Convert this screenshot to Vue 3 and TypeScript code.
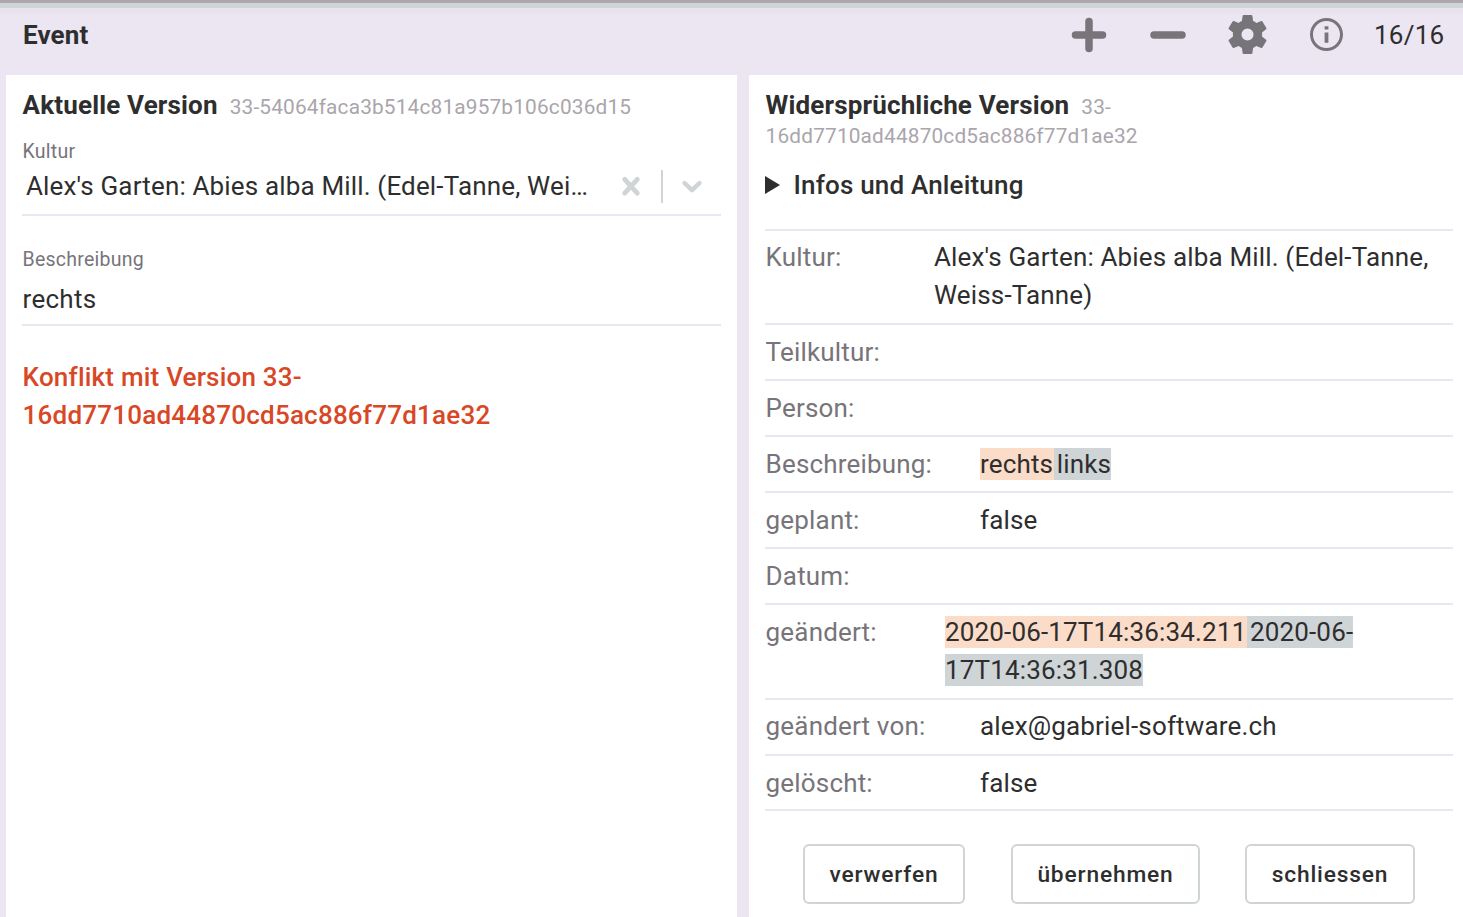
<script setup lang="ts">
interface Row { label: string; value?: string; old?: string; next?: string; height: number; indent: number; top: number }
const rows: Row[] = [
  { label: 'Kultur:', value: "Alex's Garten: Abies alba Mill. (Edel-Tanne, Weiss-Tanne)", height: 94, indent: 169, top: 7 },
  { label: 'Teilkultur:', height: 56, indent: 215, top: 8 },
  { label: 'Person:', height: 56, indent: 215, top: 8 },
  { label: 'Beschreibung:', old: 'rechts', next: 'links', height: 56, indent: 215, top: 8 },
  { label: 'geplant:', value: 'false', height: 56, indent: 215, top: 8 },
  { label: 'Datum:', height: 56, indent: 215, top: 8 },
  { label: 'geändert:', old: '2020-06-17T14:36:34.211', next: '2020-06-17T14:36:31.308', height: 95, indent: 180, top: 8 },
  { label: 'geändert von:', value: 'alex@gabriel-software.ch', height: 56, indent: 215, top: 7 },
  { label: 'gelöscht:', value: 'false', height: 55, indent: 215, top: 8 },
]
</script>

<template>
  <div class="page">
    <header class="bar">
      <h1>Event</h1>
      <div class="tools">
        <svg class="plus" viewBox="0 0 36 36"><path d="M18 4.500v27M4.500 18h27" /></svg>
        <svg class="minus" viewBox="0 0 36 36"><path d="M4 18h28" /></svg>
        <svg class="gear" viewBox="2 2 20 20"><path d="M19.43 12.98c.04-.32.07-.64.07-.98s-.03-.66-.07-.98l2.11-1.65c.19-.15.24-.42.12-.64l-2-3.46c-.12-.22-.39-.3-.61-.22l-2.49 1c-.52-.4-1.08-.73-1.69-.98l-.38-2.65C14.46 2.18 14.25 2 14 2h-4c-.25 0-.46.18-.49.42l-.38 2.65c-.61.25-1.17.59-1.69.98l-2.49-1c-.23-.09-.49 0-.61.22l-2 3.46c-.13.22-.07.49.12.64l2.11 1.65c-.04.32-.07.65-.07.98s.03.66.07.98l-2.11 1.65c-.19.15-.24.42-.12.64l2 3.46c.12.22.39.3.61.22l2.49-1c.52.4 1.08.73 1.69.98l.38 2.65c.03.24.24.42.49.42h4c.25 0 .46-.18.49-.42l.38-2.65c.61-.25 1.17-.59 1.69-.98l2.49 1c.23.09.49 0 .61-.22l2-3.46c.12-.22.07-.49-.12-.64l-2.11-1.65zM12 15.1a3.100 3.100 0 1 1 0-6.200 3.100 3.100 0 0 1 0 6.200z" /></svg>
        <svg class="info" viewBox="2 2 20 20"><path d="M10.850 7h2.300v2h-2.300zm0 3.800h2.300v6.200h-2.300zM12 2C6.480 2 2 6.480 2 12s4.480 10 10 10 10-4.480 10-10S17.520 2 12 2zm0 18.200c-4.520 0-8.200-3.680-8.200-8.200s3.680-8.200 8.200-8.200 8.200 3.680 8.200 8.200-3.680 8.200-8.200 8.200z" /></svg>
        <span class="count">16/16</span>
      </div>
    </header>
    <main>
      <section class="left">
        <h2 class="first">Aktuelle Version <small>33-54064faca3b514c81a957b106c036d15</small></h2>
        <label class="kultur">Kultur</label>
        <div class="select">
          <span class="chosen">Alex's Garten: Abies alba Mill. (Edel-Tanne, Weiss-Tanne)</span>
          <svg class="clear" viewBox="0 0 20 20"><path d="m4.300 4 11.400 12.500M15.700 4 4.300 16.500" /></svg>
          <i></i>
          <svg class="chevron" viewBox="0 0 24 24"><path d="m4.500 9 7.500 7.200L19.500 9" /></svg>
        </div>
        <label class="beschreibung">Beschreibung</label>
        <div class="input">rechts</div>
        <p class="conflict">Konflikt mit Version 33-<br />16dd7710ad44870cd5ac886f77d1ae32</p>
      </section>
      <section class="right">
        <h2>Widersprüchliche Version <small>33-<br />16dd7710ad44870cd5ac886f77d1ae32</small></h2>
        <div class="summary"><svg viewBox="0 0 15 18"><path d="M0 0 15 9 0 18Z" /></svg>Infos und Anleitung</div>
        <div class="rows">
          <div v-for="row in rows" :key="row.label" class="row" :style="{ height: row.height + 'px', paddingTop: row.top + 'px', gridTemplateColumns: row.indent + 'px 1fr' }">
            <span class="name">{{ row.label }}</span>
            <span v-if="row.old" class="value"><span class="old">{{ row.old }}</span><span class="new">{{ row.next }}</span></span>
            <span v-else class="value">{{ row.value }}</span>
          </div>
        </div>
        <div class="actions"><button class="a">verwerfen</button><button class="b">übernehmen</button><button class="c">schliessen</button></div>
      </section>
    </main>
  </div>
</template>

<style>
body { margin: 0; overflow: hidden; }
</style>
<style scoped>
* { box-sizing: border-box; }
.page { width: 1463px; height: 917px; background: #ebe6f2; font-family: Roboto, sans-serif; font-size: 26px; line-height: 38px; letter-spacing: .16px; color: #2e2e2e; overflow: hidden; }
.bar { height: 75px; border-top: 3px solid #aea5ad; box-shadow: inset 0 5px #cfd4d7, inset 0 11px #e9e3ef; display: flex; justify-content: space-between; padding: 13px 19px 0 23px; }
h1, h2 { margin: 0; font-size: 26px; font-weight: 700; }
.tools { display: flex; align-items: center; height: 38px; color: #77747a; }
svg { flex: none; fill: currentColor; }
.plus, .minus { width: 36px; height: 36px; fill: none; stroke: currentColor; stroke-width: 7.5; stroke-linecap: round; }
.minus { margin-left: 43px; }
.gear { width: 39px; height: 39px; margin: 0 0 1px 41.5px; }
.info { width: 33px; height: 33px; margin: 0 0 1px 43px; }
.count { margin-left: 31.5px; color: #2e2e2e; width: 70px; white-space: nowrap; letter-spacing: .26px; }
main { display: flex; gap: 12px; padding-left: 6px; height: 842px; }
section { background: #fff; }
.left { width: 731px; padding: 11px 16px 0 16px; }
.right { width: 714px; padding: 11px 10px 0 16px; }
small { font-size: 20.8px; line-height: 1; font-weight: 400; color: #aaa5ac; letter-spacing: .18px; margin-left: 5.4px; }
h2, label, .input, .conflict, .name { padding-left: .6px; }
.right h2 { line-height: 29px; padding-top: 5px; height: 80px; }
label { display: block; font-size: 19.5px; color: #77747a; line-height: 26px; letter-spacing: .24px; }
.kultur { margin-top: 15px; }
.select { height: 51px; border-bottom: 2px solid #ebe6f2; display: flex; align-items: center; padding: 0 17px 7px 4px; color: #cfd4d7; }
.chosen { width: 563px; overflow: hidden; white-space: nowrap; text-overflow: ellipsis; color: #2e2e2e; }
.clear { width: 22px; height: 22px; margin-left: 31px; }
.clear, .chevron { fill: none; stroke: currentColor; stroke-width: 4.4; stroke-linecap: round; stroke-linejoin: round; }
.clear { margin-left: 31.5px; margin-right: -.5px; }
.select i { width: 2px; height: 33px; background: #cfd4d7; margin-left: 19px; }
.chevron { width: 24px; height: 24px; margin-left: 17.5px; }
.beschreibung { margin-top: 31px; }
.input { border-bottom: 2px solid #ebe6f2; padding-top: 7px; height: 53px; letter-spacing: .26px; }
.conflict { margin: 32px 0 0; font-weight: 500; color: #d84726; letter-spacing: .21px; }
.summary { display: flex; align-items: center; font-weight: 500; height: 38px; letter-spacing: .18px; }
.summary svg { width: 15px; height: 18px; margin-right: 13.5px; }
.rows { border-top: 2px solid #ebe6f2; margin-top: 25px; }
.row { display: grid; border-bottom: 2px solid #ebe6f2; }
.name { color: #77747a; white-space: nowrap; letter-spacing: .17px; }
.old { background: #fadcc9; padding: 1px .5px 1px 0; }
.new { background: #cfd4d7; padding: 1px 0 1px 3px; }
.actions { display: flex; margin: 33px 0 0 38px; }
button { height: 60px; border: 2px solid #cfd4d7; border-radius: 6px; background: #fff; font: 500 22.75px Roboto, sans-serif; color: #2e2e2e; letter-spacing: .84px; padding: 0; }
.a { width: 162px; } .b { width: 189px; margin-left: 46px; } .c { width: 170px; margin-left: 45px; }
</style>
